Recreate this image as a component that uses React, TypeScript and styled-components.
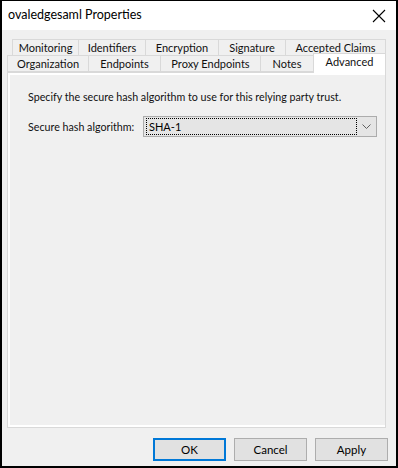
import React from "react";
import styled, { createGlobalStyle } from "styled-components";

const GlobalStyle = createGlobalStyle`
  html, body {
    margin: 0;
    padding: 0;
    background: #ffffff;
  }
  body {
    font-family: Lato, "Liberation Sans", Arial, sans-serif;
  }
`;

const topTabs = [
  { label: "Monitoring", width: 67 },
  { label: "Identifiers", width: 68 },
  { label: "Encryption", width: 74 },
  { label: "Signature", width: 68 },
  { label: "Accepted Claims", width: 101 },
];

const bottomTabs = [
  { label: "Organization", width: 82 },
  { label: "Endpoints", width: 73 },
  { label: "Proxy Endpoints", width: 101 },
  { label: "Notes", width: 54 },
  { label: "Advanced", width: 73, selected: true },
];

export default function App() {
  return (
    <>
      <GlobalStyle />
      <Window>
        <TitleBar>
          <Title>ovaledgesaml Properties</Title>
          <CloseButton>
            <svg width="14" height="14" viewBox="0 0 14 14">
              <path d="M1 1 L13 13 M13 1 L1 13" stroke="#000" strokeWidth="1.1" />
            </svg>
          </CloseButton>
        </TitleBar>
        <Body>
          <TabRow $indent={5}>
            {topTabs.map((t) => (
              <Tab key={t.label} $width={t.width}>
                {t.label}
              </Tab>
            ))}
          </TabRow>
          <TabRow $indent={0}>
            {bottomTabs.map((t) => (
              <Tab key={t.label} $width={t.width} $selected={t.selected}>
                {t.label}
              </Tab>
            ))}
          </TabRow>
          <Panel>
            <PanelInner>
              <Description>
                Specify the secure hash algorithm to use for this relying party trust.
              </Description>
              <FieldRow>
                <FieldLabel>Secure hash algorithm:</FieldLabel>
                <Select>
                  <FocusBox>SHA-1</FocusBox>
                  <Chevron>
                    <svg width="9" height="6" viewBox="0 0 9 6">
                      <path d="M0.5 0.5 L4.5 4.5 L8.5 0.5" stroke="#606060" strokeWidth="1" fill="none" />
                    </svg>
                  </Chevron>
                </Select>
              </FieldRow>
            </PanelInner>
          </Panel>
          <ButtonBar>
            <DialogButton $primary>OK</DialogButton>
            <DialogButton>Cancel</DialogButton>
            <DialogButton>Apply</DialogButton>
          </ButtonBar>
        </Body>
      </Window>
    </>
  );
}

const Window = styled.div`
  width: 398px;
  height: 468px;
  box-sizing: border-box;
  border: 2px solid #000;
  border-top: 1px solid #000;
  display: flex;
  flex-direction: column;
  background: #f0f0f0;
`;

const TitleBar = styled.div`
  height: 29px;
  flex-shrink: 0;
  background: #ffffff;
  display: flex;
  align-items: center;
  justify-content: space-between;
  padding: 0 10px 0 6px;
`;

const Title = styled.div`
  font-size: 12.5px;
  color: #000;
  padding-bottom: 2px;
`;

const CloseButton = styled.div`
  width: 14px;
  height: 14px;
  display: flex;
`;

const Body = styled.div`
  flex: 1;
  display: flex;
  flex-direction: column;
  padding: 10px 8px 6px 5px;
`;

const TabRow = styled.div<{ $indent: number }>`
  display: flex;
  align-items: flex-end;
  height: 16px;
  padding-left: ${(p) => p.$indent}px;
`;

const Tab = styled.div<{ $width: number; $selected?: boolean }>`
  width: ${(p) => p.$width}px;
  box-sizing: border-box;
  height: ${(p) => (p.$selected ? 20 : 17)}px;
  margin-bottom: ${(p) => (p.$selected ? -1 : 0)}px;
  margin-right: -1px;
  position: relative;
  z-index: ${(p) => (p.$selected ? 2 : 1)};
  border: 1px solid #d9d9d9;
  border-bottom: ${(p) => (p.$selected ? "none" : "1px solid #d9d9d9")};
  background: ${(p) => (p.$selected ? "#ffffff" : "#f0f0f0")};
  font-size: 11px;
  color: #111;
  text-align: center;
  line-height: ${(p) => (p.$selected ? 16 : 15)}px;
  white-space: nowrap;
`;

const Panel = styled.div`
  width: 379px;
  box-sizing: border-box;
  height: 356px;
  border: 1px solid #d9d9d9;
  background: #ffffff;
  padding: 2px;
  display: flex;
`;

const PanelInner = styled.div`
  flex: 1;
  background: #f0f0f0;
  padding: 14px 8px 0 18px;
  display: flex;
  flex-direction: column;
  gap: 11px;
`;

const Description = styled.div`
  font-size: 10.7px;
  line-height: 16px;
  color: #111;
`;

const FieldRow = styled.div`
  display: flex;
  align-items: center;
  gap: 6px;
`;

const FieldLabel = styled.div`
  font-size: 10.7px;
  color: #111;
  width: 109px;
  white-space: nowrap;
`;

const Select = styled.div`
  width: 234px;
  height: 21px;
  box-sizing: border-box;
  border: 1px solid #acacac;
  background: #e5e5e5;
  display: flex;
  align-items: center;
  padding: 0 0 0 2px;
`;

const FocusBox = styled.div`
  width: 211px;
  height: 17px;
  box-sizing: border-box;
  border: 1px dotted #000;
  font-size: 11px;
  line-height: 15px;
  padding-left: 2px;
  color: #000;
`;

const Chevron = styled.div`
  flex: 1;
  display: flex;
  justify-content: center;
  align-items: center;
`;

const ButtonBar = styled.div`
  display: flex;
  justify-content: flex-end;
  gap: 8px;
  margin-top: 10px;
`;

const DialogButton = styled.div<{ $primary?: boolean }>`
  width: 73px;
  height: 23px;
  box-sizing: border-box;
  border: ${(p) => (p.$primary ? "2px solid #0078d7" : "1px solid #adadad")};
  background: #e1e1e1;
  font-size: 11.5px;
  color: #000;
  display: flex;
  align-items: center;
  justify-content: center;
`;
